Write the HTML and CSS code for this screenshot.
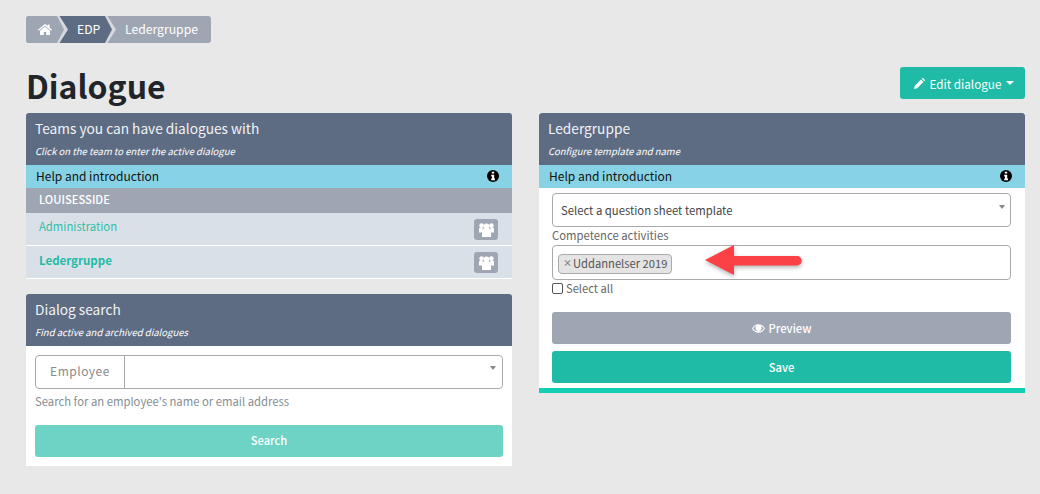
FILE: index.html
```html
<!DOCTYPE html>
<html lang="en">
<head>
<meta charset="utf-8">
<title>Dialogue</title>
<link rel="stylesheet" href="styles.css">
</head>
<body>
<nav class="crumbs">
  <a class="crumb crumb-home"><svg class="icon-home" viewBox="0 0 14 11"><path d="M7 0 0 5.700l.8 1L7 1.700l6.200 5 .8-1L11.600 3.700V.6H9.700v1.500zM2 6.700V11h3.800V8h2.400v3H12V6.700L7 2.700z" fill="#fff"/></svg></a>
  <a class="crumb crumb-mid">EDP</a>
  <a class="crumb crumb-last">Ledergruppe</a>
</nav>
<header class="page-head">
  <h1>Dialogue</h1>
  <button class="btn-edit"><svg class="icon-pencil" viewBox="0 0 12 12"><path d="M0 12l.7-3.400L7.600 1.700l2.700 2.700-6.900 6.900zM8.400.9 9.200.2c.3-.3.7-.3 1 0l1.600 1.600c.3.3.3.7 0 1l-.7.8z" fill="#fff"/></svg>Edit dialogue<span class="caret"></span></button>
</header>
<main class="columns">
  <div class="col">
    <section class="panel">
      <div class="panel-head">
        <h2>Teams you can have dialogues with</h2>
        <p>Click on the team to enter the active dialogue</p>
      </div>
      <div class="help"><span>Help and introduction</span><svg class="icon-info" viewBox="0 0 12 12"><circle cx="6" cy="6" r="6" fill="#000"/><path d="M4.800 1.800h2.400v1.800H4.800zM4.200 4.800h3v3.600h.8v1.800H4.200V8.400H5V6.400h-.8z" fill="#fff"/></svg></div>
      <div class="group">LOUISESSIDE</div>
      <a class="team"><span class="team-name">Administration</span><span class="team-btn"><svg class="icon-users" viewBox="0 0 15 14"><g fill="#fff"><circle cx="7.500" cy="3.200" r="2.800"/><circle cx="2.600" cy="2.600" r="2.300"/><circle cx="12.400" cy="2.600" r="2.300"/><path d="M3 14V8.200C3 6.400 4 5.200 5.600 5.200h3.800C11 5.200 12 6.400 12 8.200V14z"/><path d="M0 9.500V6.200C0 5.300.6 4.600 1.400 4.600H3.600V9.500zM15 9.500V6.200c0-.9-.6-1.600-1.400-1.600h-2.200v4.900z"/></g></svg></span></a>
      <a class="team team-active"><span class="team-name">Ledergruppe</span><span class="team-btn"><svg class="icon-users" viewBox="0 0 15 14"><g fill="#fff"><circle cx="7.500" cy="3.200" r="2.800"/><circle cx="2.600" cy="2.600" r="2.300"/><circle cx="12.400" cy="2.600" r="2.300"/><path d="M3 14V8.200C3 6.400 4 5.200 5.600 5.200h3.800C11 5.200 12 6.400 12 8.200V14z"/><path d="M0 9.500V6.200C0 5.300.6 4.600 1.400 4.600H3.600V9.500zM15 9.500V6.200c0-.9-.6-1.600-1.400-1.600h-2.200v4.900z"/></g></svg></span></a>
    </section>
    <section class="panel">
      <div class="panel-head">
        <h2>Dialog search</h2>
        <p>Find active and archived dialogues</p>
      </div>
      <div class="search-body">
        <div class="input-group">
          <span class="addon">Employee</span>
          <span class="select-fill"><span class="arrow"></span></span>
        </div>
        <p class="hint">Search for an employee's name or email address</p>
        <button class="btn btn-search">Search</button>
      </div>
    </section>
  </div>
  <div class="col">
    <section class="panel panel-edit">
      <div class="panel-head">
        <h2>Ledergruppe</h2>
        <p>Configure template and name</p>
      </div>
      <div class="help"><span>Help and introduction</span><svg class="icon-info" viewBox="0 0 12 12"><circle cx="6" cy="6" r="6" fill="#000"/><path d="M4.800 1.800h2.400v1.800H4.800zM4.200 4.800h3v3.600h.8v1.800H4.200V8.400H5V6.400h-.8z" fill="#fff"/></svg></div>
      <div class="edit-body">
        <div class="select"><span>Select a question sheet template</span><span class="arrow"></span></div>
        <label class="field-label">Competence activities</label>
        <div class="multi"><span class="tag"><span class="tag-x">×</span>Uddannelser 2019</span>
          <svg class="red-arrow" viewBox="0 0 112 40" width="112" height="40"><path d="M2 15 31 0v11h63a4.500 4.500 0 0 1 0 9.500H31V30z" fill="#fc4146"/></svg>
        </div>
        <label class="check"><span class="box"></span>Select all</label>
        <button class="btn btn-preview"><svg class="icon-eye" viewBox="0 0 14 9"><path fill-rule="evenodd" d="M7 0c3 0 5.500 1.800 7 4.500C12.500 7.200 10 9 7 9S1.500 7.200 0 4.500C1.500 1.800 4 0 7 0zM4.800 1.900a4.800 4.800 0 0 0-3.500 2.600C2.500 6.500 4.600 7.800 7 7.800s4.500-1.300 5.700-3.300a4.800 4.800 0 0 0-3.500-2.600 3.200 3.200 0 1 1-4.400 0z" fill="#fff"/><circle cx="6.200" cy="3.200" r="1" fill="#fff"/></svg>Preview</button>
        <button class="btn btn-save">Save</button>
      </div>
    </section>
  </div>
</main>
</body>
</html>
```

FILE: styles.css
```css
* { box-sizing: border-box; }
html, body { margin: 0; padding: 0; }
body {
  background: #e8e8e8;
  color: #212529;
  font-family: "Noto Sans CJK SC", "Noto Sans", sans-serif;
  font-size: 13px;
  padding: 16px 15px 0 26px;
  height: 494px;
  overflow: hidden;
}
.crumbs {
  display: flex;
  width: max-content;
  height: 27px;
  border-radius: 3px;
  overflow: hidden;
  background: #9fa6b3;
}
.crumb {
  position: relative;
  display: flex;
  align-items: center;
  color: #fff;
  font-size: 12.2px;
  line-height: 25px;
  white-space: nowrap;
}
.crumb-home { width: 31px; padding-left: 12px; background: #9fa6b3; z-index: 2; }
.crumb-mid { width: 48px; padding-left: 20px; background: #5e6c83; z-index: 1; }
.crumb-last { width: 106px; padding-left: 20px; }
.crumb-home::before, .crumb-mid::before {
  content: "";
  position: absolute;
  top: 0;
  left: 100%;
  width: 11px;
  height: 27px;
  background: #d5d8dd;
  clip-path: polygon(0 0, 2.500px 0, 100% 50%, 2.500px 100%, 0 100%);
}
.crumb-home::after, .crumb-mid::after {
  content: "";
  position: absolute;
  top: 0;
  left: 100%;
  width: 7px;
  height: 27px;
  background: inherit;
  clip-path: polygon(0 0, 100% 50%, 0 100%);
}
.icon-home { width: 14px; height: 11px; margin-top: -1px; }
.page-head {
  display: flex;
  justify-content: space-between;
  align-items: flex-start;
  height: 70px;
  padding-top: 24px;
}
h1 {
  margin: -1px 0 0;
  font-size: 32px;
  font-weight: 700;
  line-height: 38px;
  color: #212529;
}
.btn-edit {
  display: flex;
  align-items: center;
  justify-content: center;
  width: 125px;
  height: 32px;
  padding: 0 0 0 3px;
  border: 0;
  border-radius: 3px;
  background: #1fbba6;
  color: #fff;
  font: inherit;
  font-size: 11.7px;
  white-space: nowrap;
}
.icon-pencil { width: 11px; height: 11px; margin-right: 5px; }
.caret {
  margin-left: 5px;
  border-top: 4px solid #fff;
  border-left: 4px solid transparent;
  border-right: 4px solid transparent;
}
.columns {
  display: grid;
  grid-template-columns: 486px 486px;
  gap: 27px;
}
.col { display: flex; flex-direction: column; gap: 15px; }
.panel-head {
  height: 52px;
  padding: 6px 9px 0;
  background: #5e6c83;
  border-radius: 3px 3px 0 0;
  color: #fff;
}
.panel-head h2 {
  margin: 0;
  font-size: 13.7px;
  font-weight: 400;
  line-height: 18px;
  color: #f1f3f5;
}
.panel-head p {
  margin: 7px 0 0;
  font-size: 9.5px;
  font-style: italic;
  line-height: 15px;
}
.help {
  display: flex;
  justify-content: space-between;
  align-items: center;
  height: 23px;
  padding: 0 13px 0 10px;
  background: #87d3e5;
  color: #111;
  font-size: 12px;
  line-height: 21px;
}
.help span { margin-top: -2px; }
.icon-info { width: 12px; height: 12px; margin-top: -2px; }
.group {
  height: 25px;
  padding-left: 13px;
  background: #9fa6b3;
  color: #fff;
  font-size: 11.2px;
  font-weight: 500;
  line-height: 23px;
}
.team {
  display: flex;
  justify-content: space-between;
  height: 33px;
  padding: 6px 14px 0 13px;
  background: #dae0e8;
  border-bottom: 1px solid #fff;
  color: #2bbfa8;
  font-size: 11.3px;
  line-height: 15px;
}
.team-active { font-weight: 700; color: #1fbba6; font-size: 11.5px; line-height: 17px; }
.team-btn {
  display: flex;
  align-items: center;
  justify-content: center;
  width: 24px;
  height: 21px;
  background: #9fa6b3;
  border-radius: 3px;
}
.icon-users { width: 15px; height: 14px; }
.search-body {
  height: 120px;
  padding: 9px 9px 0;
  background: #fff;
}
.input-group {
  display: flex;
  height: 34px;
  border: 1px solid #aaa;
  border-radius: 4px;
}
.addon {
  width: 89px;
  border-right: 1px solid #aaa;
  color: #8a8a8a;
  font-size: 12px;
  line-height: 30px;
  text-align: center;
  letter-spacing: .5px;
}
.select-fill { flex: 1; display: flex; justify-content: flex-end; padding: 10px 6px 0 0; }
.arrow {
  width: 0;
  height: 0;
  border-top: 4px solid #888;
  border-left: 3.500px solid transparent;
  border-right: 3.500px solid transparent;
}
.hint {
  margin: 4px 0 0;
  color: #868e96;
  font-size: 11.3px;
  line-height: 17px;
}
.btn {
  display: flex;
  align-items: center;
  justify-content: center;
  width: 100%;
  height: 32px;
  border: 0;
  border-radius: 3px;
  color: #fff;
  font: inherit;
  font-size: 11.2px;
  font-weight: 500;
}
.btn-search { margin-top: 15px; padding-bottom: 3px; background: #6dd3c4; }
.panel-edit { border-bottom: 5px solid #11ceb5; background: #fff; }
.edit-body { height: 200px; padding: 5px 14px 0 13px; background: #fff; }
.select {
  display: flex;
  justify-content: space-between;
  align-items: center;
  height: 34px;
  padding: 0 5px 0 8px;
  border: 1px solid #aaa;
  border-radius: 4px;
  color: #444;
  font-size: 11.3px;
}
.select .arrow { margin-bottom: 6px; }
.field-label {
  display: block;
  height: 18px;
  color: #666;
  font-size: 11.3px;
  line-height: 17px;
}
.multi {
  position: relative;
  height: 35px;
  padding: 5px 5px 0;
  border: 1px solid #aaa;
  border-radius: 4px;
}
.tag {
  display: inline-flex;
  align-items: center;
  width: 114px;
  height: 20px;
  padding: 0 0 3px 4px;
  background: #e4e4e4;
  border: 1px solid #aaa;
  border-radius: 4px;
  color: #555;
  font-size: 11.2px;
  white-space: nowrap;
}
.tag-x { margin-right: 1px; color: #888; font-weight: 700; font-size: 9px; }
.red-arrow {
  position: absolute;
  left: 150px;
  top: -1px;
  filter: drop-shadow(0 2px 2px rgba(0, 0, 0, .3));
}
.check {
  display: flex;
  align-items: center;
  height: 18px;
  margin-top: -1px;
  color: #666;
  font-size: 11.2px;
  line-height: 16px;
}
.box {
  width: 11px;
  height: 11px;
  margin-right: 3px;
  border: 1px solid #555;
  border-radius: 2px;
  background: #fff;
}
.btn-preview { margin-top: 15px; background: #9fa6b3; }
.icon-eye { width: 13px; height: 9px; margin-right: 4px; }
.btn-save { margin-top: 7px; background: #1fbba6; }
```
